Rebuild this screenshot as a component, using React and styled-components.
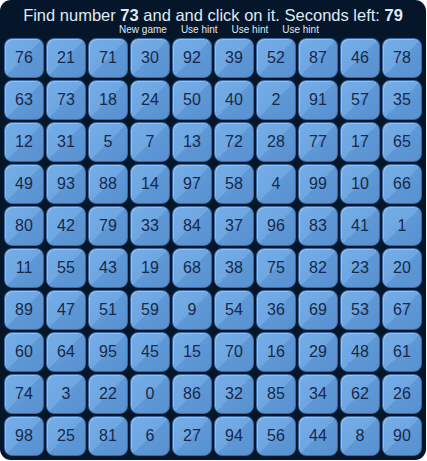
import React from 'react'
import styled, {createGlobalStyle} from 'styled-components'

const Global = createGlobalStyle`
    html, body {
        margin: 0;
        padding: 0;
        background: #ffffff;
    }
`

const numbers = [
    [76, 21, 71, 30, 92, 39, 52, 87, 46, 78],
    [63, 73, 18, 24, 50, 40, 2, 91, 57, 35],
    [12, 31, 5, 7, 13, 72, 28, 77, 17, 65],
    [49, 93, 88, 14, 97, 58, 4, 99, 10, 66],
    [80, 42, 79, 33, 84, 37, 96, 83, 41, 1],
    [11, 55, 43, 19, 68, 38, 75, 82, 23, 20],
    [89, 47, 51, 59, 9, 54, 36, 69, 53, 67],
    [60, 64, 95, 45, 15, 70, 16, 29, 48, 61],
    [74, 3, 22, 0, 86, 32, 85, 34, 62, 26],
    [98, 25, 81, 6, 27, 94, 56, 44, 8, 90]
]

const Board = styled.div`
    width: 426px;
    height: 460px;
    box-sizing: border-box;
    background: #06162a;
    border-radius: 11px;
    padding: 3px 4px 0 4px;
    font-family: "Liberation Sans", Arial, sans-serif;
`

const Title = styled.div`
    color: #dfe9f5;
    font-size: 16.5px;
    line-height: 20px;
    text-align: center;
    padding-top: 2px;
    b {
        font-weight: bold;
    }
`

const Links = styled.div`
    display: flex;
    justify-content: center;
    gap: 14px;
    height: 14px;
    margin-top: -1px;
    padding-left: 12px;
`

const Link = styled.span`
    color: #dfe9f5;
    font-size: 10px;
    line-height: 12px;
    cursor: pointer;
`

const Grid = styled.div`
    display: grid;
    grid-template-columns: repeat(10, 40px);
    grid-auto-rows: 40px;
    gap: 2px;
`

const Cell = styled.div`
    box-sizing: border-box;
    border: 1px solid #3a6aa3;
    border-radius: 8px;
    background: linear-gradient(135deg, #75ade8 0%, #6ea6e2 50%, #5f98d7 50%, #5890d0 100%);
    box-shadow: inset 1px 1px 0 rgba(255, 255, 255, 0.25);
    display: flex;
    align-items: center;
    justify-content: center;
    color: #17294a;
    font-size: 16px;
    cursor: pointer;
`

export default function App() {
    return (
        <>
            <Global/>
            <Board>
                <Title>
                    Find number <b>73</b> and and click on it. Seconds left: <b>79</b>
                </Title>
                <Links>
                    <Link>New game</Link>
                    <Link>Use hint</Link>
                    <Link>Use hint</Link>
                    <Link>Use hint</Link>
                </Links>
                <Grid>
                    {numbers.flat().map((n, i) => (
                        <Cell key={i}>{n}</Cell>
                    ))}
                </Grid>
            </Board>
        </>
    )
}
